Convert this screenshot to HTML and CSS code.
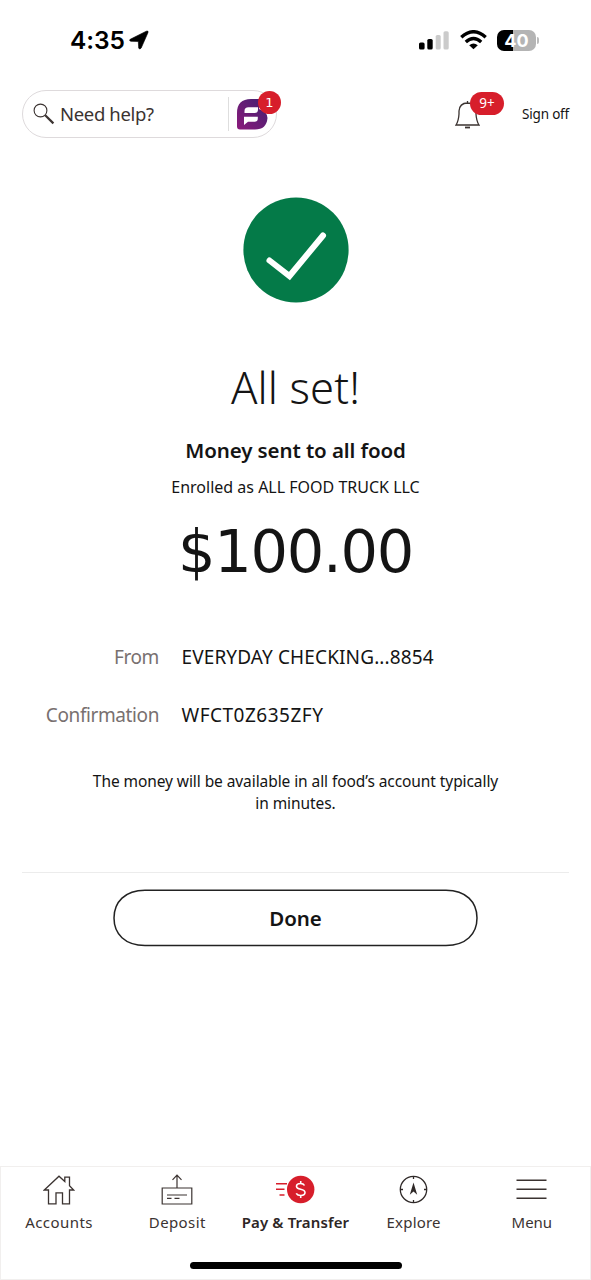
FILE: index.html
```html
<!DOCTYPE html>
<html lang="en">
<head>
<meta charset="utf-8">
<title>Payment sent</title>
<link rel="stylesheet" href="styles.css">
</head>
<body>
<div class="screen">
  <header class="status">
    <div class="clock"><span class="time">4:35</span>
      <svg class="locate" width="20" height="20" viewBox="0 0 20 20"><path d="M1.200 9.300 17.300 1.200Q19.800.3 18.900 2.800L12.200 18Q10.900 19.900 9.700 18.200L9.300 11.500 1.800 11.300Q-.3 10.600 1.200 9.300Z" stroke="#000" stroke-width=".6"/></svg>
    </div>
    <div class="signals">
      <svg width="31" height="20" viewBox="0 0 31 20"><rect x="0" y="12.500" width="5.600" height="7" rx="1.600"/><rect x="8.300" y="9" width="5.400" height="10.500" rx="1.600"/><rect x="16.700" y="5" width="5" height="14.500" rx="1.600" fill="#cbcbcb"/><rect x="24.500" y="1.200" width="5.200" height="18.300" rx="1.600" fill="#cbcbcb"/></svg>
      <svg width="27" height="20" viewBox="0 0 27 20" fill="none" stroke="#000" stroke-width="3.400"><path d="M1.300 7.300Q13.500-3.800 25.700 7.300M5.800 12Q13.500 5.200 21.200 12"/><path d="M13.500 19.200 9.200 15.200Q13.500 11.800 17.800 15.200Z" fill="#000" stroke="none"/></svg>
      <div class="battery"><div class="cell">40</div><i class="nub"></i></div>
    </div>
  </header>

  <div class="topbar">
    <div class="search">
      <svg class="lens" width="22" height="22" viewBox="0 0 22 22" fill="none" stroke="#3b3331"><circle cx="7.500" cy="7.500" r="6.400" stroke-width="1.100"/><path d="M12.200 12.200 20.400 20.400" stroke-width="2.200"/></svg>
      <span class="ask">Need help?</span>
      <i class="split"></i>
      <svg class="fargo" width="31" height="31" viewBox="0 0 31 31"><defs><linearGradient id="plum" x1="0" y1="1" x2="1" y2="0"><stop offset="0" stop-color="#8c1a7c"/><stop offset="1" stop-color="#40216f"/></linearGradient></defs><path d="M0 27.500V14Q0 0 14 0H22V10Q30.500 13 30.500 19Q29.500 30.500 18 30.500H3Q0 30.500 0 27.500Z" fill="url(#plum)"/><path d="M7.500 14V12Q7.500 8.300 11.500 8.300H21V10.500Q21 14 17.500 14ZM7 26V17.800H20.800V19.500Q20.800 22.800 17.500 22.800H11Z" fill="#fff"/></svg>
      <span class="count">1</span>
    </div>
    <div class="actions">
      <div class="alerts">
        <svg width="25" height="29" viewBox="0 0 25 29" fill="none" stroke="#3b3331" stroke-width="1.300"><path d="M1 25H24Q21.400 21 21 14V11Q20.500 3.200 12.500 3Q4.500 3.200 4 11V14Q3.600 21 1 25ZM12.500 1V3"/><path d="M10 27.500H15" stroke-width="1.800"/></svg>
        <span class="many">9+</span>
      </div>
      <span class="signoff">Sign off</span>
    </div>
  </div>

  <main class="receipt">
    <svg class="tick" width="106" height="106" viewBox="0 0 106 106"><circle cx="53" cy="53" r="52.600" fill="#047a48"/><path d="M26.500 63.500 46.500 79 80 38.500" fill="none" stroke="#fff" stroke-width="6" stroke-linecap="round" stroke-linejoin="miter"/></svg>
    <h1 class="title">All set!</h1>
    <h2 class="payee">Money sent to all food</h2>
    <p class="enrolled">Enrolled as ALL FOOD TRUCK LLC</p>
    <div class="amount">$100.00</div>
    <dl class="details">
      <dt class="from">From</dt><dd class="account">EVERYDAY CHECKING...8854</dd>
      <dt class="confirm">Confirmation</dt><dd class="code">WFCT0Z635ZFY</dd>
    </dl>
    <p class="note">The money will be available in all food’s account typically<br>in minutes.</p>
    <div class="footer"><button class="done"><svg class="outline" width="365" height="58" viewBox="0 0 365 58"><path d="M32 1.200H333C353 1.200 364 13 364 29S353 56.400 333 56.400H32C12 56.400 1 45 1 29S12 1.200 32 1.200Z" fill="#fff" stroke="#222" stroke-width="1.500"/></svg><span>Done</span></button></div>
  </main>

  <nav class="tabs">
    <div class="row">
      <a class="tab"><svg width="32" height="32" viewBox="0 0 32 32" fill="none" stroke="#3b3331" stroke-width="1.300"><path d="M1.300 16 16 2.200 21.800 7.500V3.200H26.500V11.800L30.700 16H26.500V29.800H19.500V18.800H13V29.800H5.500V16Z"/></svg><span class="accounts">Accounts</span></a>
      <a class="tab"><svg width="32" height="32" viewBox="0 0 32 32" fill="none" stroke="#3b3331" stroke-width="1.200"><path d="M1.200 14H30.800V30H1.200ZM16 14V1.500M11.500 5.800 16 1.200 20.500 5.800M6 21H26M6 24.300H10.500M13.500 24.300H18.500"/></svg><span class="deposit">Deposit</span></a>
      <a class="tab current"><svg width="40" height="32" viewBox="0 0 40 32"><circle cx="25.700" cy="15.500" r="13.700" fill="#d71e2b"/><path d="M1 9.700H12M1 15.200H9.500M4.500 21H9.500" stroke="#d71e2b" stroke-width="1.500"/><path d="M29.500 11.500Q28.500 9.500 25.500 9.500Q21.500 9.500 21.500 12.300Q21.500 14.500 25.700 15.300Q30 16.200 30 18.600Q30 21.500 25.800 21.500Q22.500 21.500 21.200 19.300M25.700 7V9.500M25.700 21.500V24" fill="none" stroke="#fff" stroke-width="1.600"/></svg><span>Pay &amp; Transfer</span></a>
      <a class="tab"><svg width="32" height="32" viewBox="0 0 32 32" fill="none" stroke="#2f2928" stroke-width="1.300"><circle cx="15.500" cy="15.500" r="13.200"/><path d="M15.500 2.300V5M15.500 26V28.700M2.300 15.500H5M26 15.500H28.700"/><path d="M15.500 8.500 19.200 20.800 15.500 17.500 11.800 20.800Z" fill="#2f2928" stroke="none"/></svg><span class="explore">Explore</span></a>
      <a class="tab"><svg width="32" height="32" viewBox="0 0 32 32" fill="none" stroke="#3b3331" stroke-width="1.400"><path d="M.5 6.300H30.500M.5 15.300H30.500M.5 24.300H30.500"/></svg><span>Menu</span></a>
    </div>
    <i class="home"></i>
  </nav>
</div>
</body>
</html>
```
FILE: styles.css
```css
* { box-sizing: border-box; }
body { margin: 0; background: #fff; color: #141414; font-family: "Noto Sans", sans-serif; }
h1, h2, p, dl, dd { margin: 0; }
svg { display: block; flex: none; }
.screen { width: 591px; height: 1280px; display: flex; flex-direction: column; overflow: hidden; }
.status { height: 90px; flex: none; padding: 20px 52px 30px 70px; display: flex; justify-content: space-between; align-items: center; }
.clock { display: flex; align-items: center; gap: 4px; color: #000; }
.time { font: 600 24.500px/40px Inter, sans-serif; letter-spacing: -0.100px; }
.signals { display: flex; align-items: center; gap: 10px; }
.battery { display: flex; align-items: center; gap: 1px; }
.cell { width: 39px; height: 21px; border-radius: 7px; background: linear-gradient(90deg, #000 16px, #b4b4b4 16px); color: #fff; font: 700 18px/21px Inter, sans-serif; text-align: center; }
.nub { width: 2px; height: 7px; border-radius: 0 3px 3px 0; background: #bbb; }
.topbar { height: 48px; flex: none; padding: 0 22px; display: flex; justify-content: space-between; }
.search { position: relative; width: 255px; height: 48px; border: 1.500px solid #dedadc; border-radius: 24px; display: flex; align-items: center; padding-left: 10px; }
.ask { margin-left: 5px; width: 168px; font-size: 18.500px; letter-spacing: -0.350px; line-height: 46px; color: #3b3331; }
.split { width: 1px; height: 34px; background: #dedede; margin-right: 8px; }
.count { position: absolute; left: 235px; top: 0; width: 23px; height: 23px; border-radius: 50%; background: #d71e2b; color: #fff; font: 13px/23px "DejaVu Sans", sans-serif; text-align: center; }
.actions { display: flex; }
.alerts { position: relative; width: 67px; padding-top: 10px; }
.many { position: absolute; left: 15px; top: 2px; width: 34px; height: 23px; border-radius: 12px; background: #d71e2b; color: #fff; font-size: 13.500px; line-height: 23px; text-align: center; }
.signoff { font-size: 13.500px; letter-spacing: -0.200px; line-height: 48px; white-space: nowrap; }
.receipt { flex: 1; display: flex; flex-direction: column; align-items: center; padding: 59px 22px 0; text-align: center; }
.title { margin-top: 54px; font-size: 43.500px; font-weight: 300; line-height: 60px; letter-spacing: 0.150px; }
.payee { margin-top: 18px; font-size: 20.500px; font-weight: 600; letter-spacing: -0.100px; line-height: 30px; }
.enrolled { margin-top: 11px; font-size: 16px; line-height: 22px; }
.amount { margin-top: 19px; font: 59px/70px "DejaVu Sans", sans-serif; letter-spacing: -1.300px; }
.details { margin-top: 55px; width: 547px; display: grid; grid-template-columns: 137px 1fr; column-gap: 22.500px; row-gap: 28px; font-size: 19px; line-height: 30px; }
.details dt { text-align: right; color: #787070; }
.details dd { text-align: left; }
.from, .confirm { letter-spacing: -0.400px; }
.account { letter-spacing: 0.130px; }
.code { letter-spacing: 0.500px; }
.note { margin-top: 41px; font-size: 15.500px; line-height: 21.500px; letter-spacing: -0.080px; }
.footer { margin-top: 58px; width: 547px; border-top: 1.500px solid #ececec; padding-top: 16px; display: flex; justify-content: center; }
.done { position: relative; width: 365px; height: 58px; padding: 0; border: 0; background: none; color: #141414; font: 600 20.500px/58px "Noto Sans", sans-serif; }
.done span { position: relative; }
.outline { position: absolute; left: 0; top: 0; }
.tabs { height: 114px; flex: none; border: 1.500px solid #f1efee; display: flex; flex-direction: column; align-items: center; }
.row { width: 591px; display: grid; grid-template-columns: repeat(5, 118.200px); padding-top: 7px; }
.tab { display: flex; flex-direction: column; align-items: center; font-size: 15px; line-height: 20px; color: #3b3331; white-space: nowrap; }
.tab span { margin-top: 6px; }
.accounts { letter-spacing: 0.450px; }
.deposit { letter-spacing: 0.400px; }
.explore { letter-spacing: 0.200px; }
.current { font-weight: 600; color: #2d2625; letter-spacing: 0.120px; }
.home { width: 212px; height: 7px; border-radius: 4px; background: #000; margin-top: 30px; }
```
